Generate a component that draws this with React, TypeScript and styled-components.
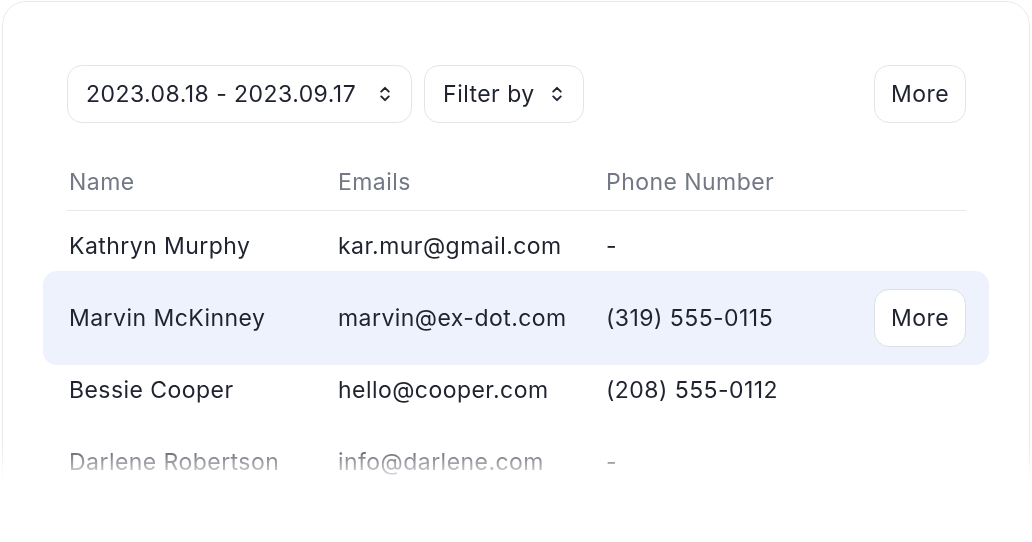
import React from "react";
import styled, { createGlobalStyle } from "styled-components";

const GlobalStyle = createGlobalStyle`
  html, body {
    margin: 0;
    padding: 0;
    background: #ffffff;
    overflow: hidden;
  }
  body {
    font-family: Inter, "Noto Sans", sans-serif;
    color: #1f2330;
  }
`;

const Page = styled.div`
  width: 1032px;
  height: 542px;
  padding: 1px 2px 0 2px;
  box-sizing: border-box;
  overflow: hidden;
`;

const Card = styled.div`
  border: 1.5px solid #e7e7ea;
  border-radius: 24px;
  padding: 63px 63px 80px 64px;
  background: #ffffff;
  -webkit-mask-image: linear-gradient(to bottom, #000 0, #000 435px, transparent 482px);
  mask-image: linear-gradient(to bottom, #000 0, #000 435px, transparent 482px);
`;

const Toolbar = styled.div`
  display: flex;
  align-items: center;
  gap: 12px;
`;

const Spacer = styled.div`
  flex: 1;
`;

const Button = styled.button`
  display: inline-flex;
  align-items: center;
  gap: 19px;
  height: 58px;
  padding: 0 16px;
  box-sizing: border-box;
  border: 1.5px solid #e4e5e9;
  border-radius: 15px;
  background: #ffffff;
  font-family: inherit;
  font-size: 23px;
  letter-spacing: 0.45px;
  color: #1f2330;
  cursor: pointer;
`;

const SelectButton = styled(Button)<{ $gap?: number }>`
  gap: ${(p) => p.$gap ?? 19}px;
  padding: 0 20px 0 18px;
`;

const Table = styled.div`
  margin-top: 28px;
  display: flex;
  flex-direction: column;
`;

const Grid = styled.div`
  display: grid;
  grid-template-columns: 269px 268px 1fr auto;
  align-items: center;
  padding-left: 2px;
  box-sizing: border-box;
  font-size: 23px;
  letter-spacing: 0.45px;
`;

const HeadRow = styled(Grid)`
  height: 60px;
  padding-top: 2px;
  border-bottom: 1.5px solid #e8e8eb;
  color: #737886;
`;

const Row = styled(Grid)<{ $active?: boolean }>`
  position: relative;
  height: 72px;
  padding-bottom: 3px;
  color: #1f2330;

  &::before {
    content: "";
    position: absolute;
    inset: -12px -23px -10px -24px;
    border-radius: 14px;
    background: ${(p) => (p.$active ? "#eef2fd" : "transparent")};
    z-index: 0;
  }

  & > * {
    position: relative;
    z-index: 1;
  }
`;

const Cell = styled.div`
  white-space: nowrap;
`;

const RowButton = styled(Button)`
  border-color: #dcdfe7;
`;

const Updown = () => (
  <svg width="12" height="18" viewBox="0 0 12 18" fill="none">
    <path
      d="M2.2 6.6 L6 2.8 L9.8 6.6 M2.2 11.4 L6 15.2 L9.8 11.4"
      stroke="#1f2330"
      strokeWidth="1.9"
      strokeLinecap="round"
      strokeLinejoin="round"
    />
  </svg>
);

const people = [
  { name: "Kathryn Murphy", email: "kar.mur@gmail.com", phone: "-" },
  { name: "Marvin McKinney", email: "marvin@ex-dot.com", phone: "(319) 555-0115", active: true },
  { name: "Bessie Cooper", email: "hello@cooper.com", phone: "(208) 555-0112" },
  { name: "Darlene Robertson", email: "info@darlene.com", phone: "-" },
];

const App = () => {
  return (
    <Page>
      <GlobalStyle />
      <Card>
        <Toolbar>
          <SelectButton $gap={23}>
            2023.08.18 - 2023.09.17
            <Updown />
          </SelectButton>
          <SelectButton $gap={16}>
            Filter by
            <Updown />
          </SelectButton>
          <Spacer />
          <Button>More</Button>
        </Toolbar>
        <Table>
          <HeadRow>
            <Cell>Name</Cell>
            <Cell>Emails</Cell>
            <Cell>Phone Number</Cell>
            <Cell />
          </HeadRow>
          {people.map((p) => (
            <Row key={p.name} $active={p.active}>
              <Cell>{p.name}</Cell>
              <Cell>{p.email}</Cell>
              <Cell>{p.phone}</Cell>
              <Cell>{p.active ? <RowButton>More</RowButton> : null}</Cell>
            </Row>
          ))}
        </Table>
      </Card>
    </Page>
  );
};

export default App;
